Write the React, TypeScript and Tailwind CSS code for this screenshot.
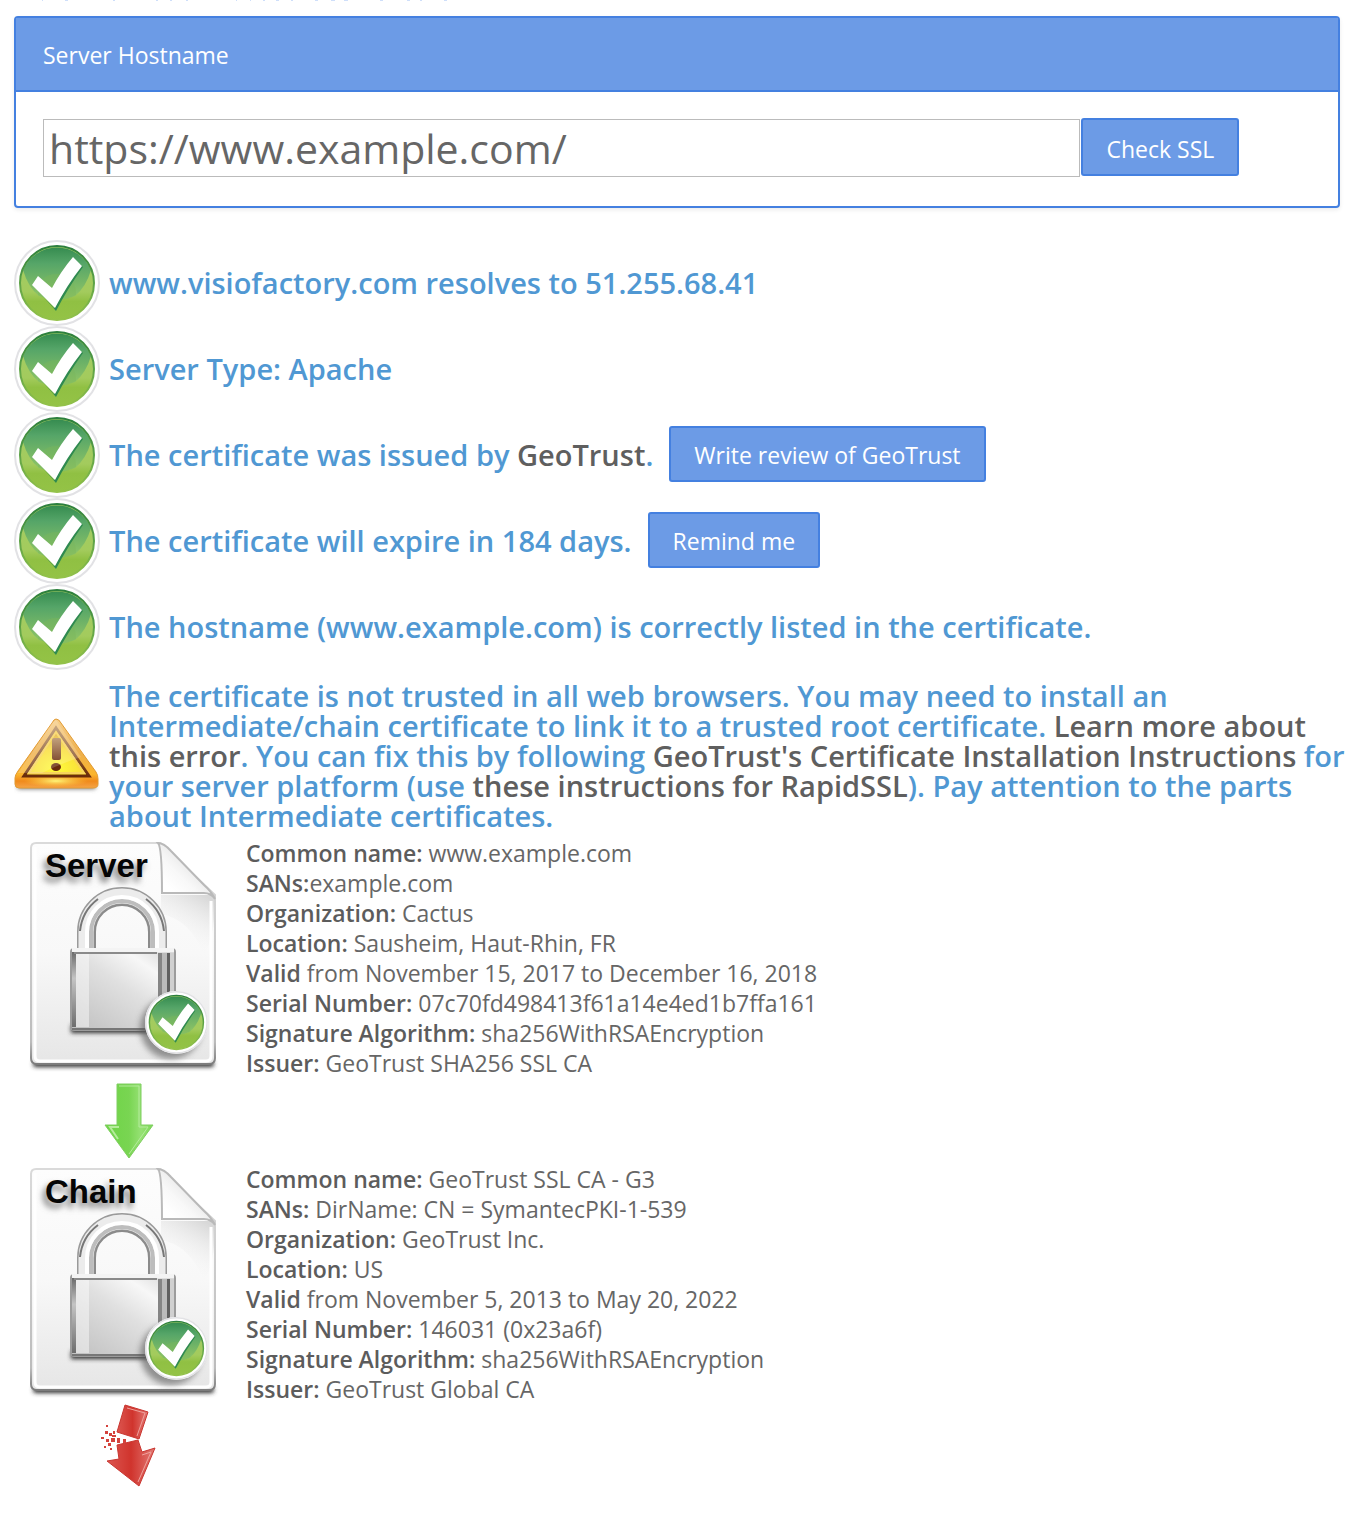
import type { ReactNode } from "react";

function Defs() {
  return (
    <svg width="0" height="0" className="absolute" aria-hidden="true">
      <defs>
        <linearGradient id="tickTop" x1="0" y1="0" x2="0" y2="1">
          <stop offset="0" stopColor="#368c50" />
          <stop offset="0.3" stopColor="#55a568" />
          <stop offset="1" stopColor="#93c765" />
        </linearGradient>
        <linearGradient id="tickBase" x1="0" y1="0" x2="0" y2="1">
          <stop offset="0.3" stopColor="#a3cc62" />
          <stop offset="0.62" stopColor="#a3cb5d" />
          <stop offset="0.75" stopColor="#90c043" />
          <stop offset="1" stopColor="#94c346" />
        </linearGradient>
        <linearGradient id="tickRim" x1="0" y1="0" x2="0" y2="1">
          <stop offset="0" stopColor="#2c7f3d" />
          <stop offset="0.5" stopColor="#5ca247" />
          <stop offset="1" stopColor="#94c24a" />
        </linearGradient>
        <linearGradient id="warnEdge" x1="0" y1="0" x2="0" y2="1">
          <stop offset="0" stopColor="#f6cf8c" />
          <stop offset="0.5" stopColor="#eeb04c" />
          <stop offset="0.8" stopColor="#fbb52c" />
          <stop offset="0.9" stopColor="#f08a1c" />
          <stop offset="1" stopColor="#f5a447" />
        </linearGradient>
        <radialGradient id="warnFace" cx="0.5" cy="0.85" r="0.85">
          <stop offset="0" stopColor="#fffb3c" />
          <stop offset="0.5" stopColor="#f8dc38" />
          <stop offset="1" stopColor="#dda33c" />
        </radialGradient>
        <radialGradient id="warnGlow" cx="0.5" cy="0.5" r="0.5">
          <stop offset="0" stopColor="#fff67a" />
          <stop offset="1" stopColor="#ffd040" stopOpacity="0" />
        </radialGradient>
        <linearGradient id="warnInk" x1="0" y1="0" x2="0" y2="1">
          <stop offset="0" stopColor="#b58d60" />
          <stop offset="1" stopColor="#6a2c0a" />
        </linearGradient>
        <linearGradient id="paper" x1="0" y1="0" x2="0" y2="1">
          <stop offset="0" stopColor="#fdfdfd" />
          <stop offset="0.5" stopColor="#f8f8f8" />
          <stop offset="1" stopColor="#e6e6e6" />
        </linearGradient>
        <linearGradient id="paperEdge" x1="0" y1="0" x2="0" y2="1">
          <stop offset="0" stopColor="#dadada" />
          <stop offset="0.9" stopColor="#bcbcbc" />
          <stop offset="1" stopColor="#7c7c7c" />
        </linearGradient>
        <linearGradient id="paperShade" x1="0.3" y1="1" x2="0.8" y2="0">
          <stop offset="0.2" stopColor="#f6f6f6" stopOpacity="0" />
          <stop offset="1" stopColor="#d8d8d8" />
        </linearGradient>
        <linearGradient id="fold" x1="0.2" y1="0.8" x2="0.7" y2="0.3">
          <stop offset="0" stopColor="#ffffff" />
          <stop offset="0.4" stopColor="#f8f8f8" />
          <stop offset="1" stopColor="#e2e2e2" />
        </linearGradient>
        <linearGradient id="body" x1="0" y1="1" x2="0.9" y2="0">
          <stop offset="0" stopColor="#bfbfbf" />
          <stop offset="0.55" stopColor="#e0e0e0" />
          <stop offset="0.8" stopColor="#f7f7f7" />
          <stop offset="1" stopColor="#dadada" />
        </linearGradient>
        <linearGradient id="bodySide" x1="0" y1="0" x2="0" y2="1">
          <stop offset="0" stopColor="#6a6a6a" />
          <stop offset="0.35" stopColor="#c4c4c4" />
          <stop offset="1" stopColor="#6d6d6d" />
        </linearGradient>
        <linearGradient id="goArrow" x1="0" y1="0" x2="1" y2="0">
          <stop offset="0" stopColor="#6ed446" />
          <stop offset="0.5" stopColor="#79d552" />
          <stop offset="0.75" stopColor="#96e174" />
          <stop offset="1" stopColor="#7bd956" />
        </linearGradient>
        <linearGradient id="stopArrow" x1="0" y1="0" x2="1" y2="0">
          <stop offset="0" stopColor="#dc5650" />
          <stop offset="0.5" stopColor="#d0342d" />
          <stop offset="1" stopColor="#e37a75" />
        </linearGradient>
        <filter id="soft1" x="-20%" y="-100%" width="140%" height="300%">
          <feGaussianBlur stdDeviation="2" />
        </filter>
        <filter id="soft3" x="-30%" y="-30%" width="160%" height="160%">
          <feGaussianBlur stdDeviation="3" />
        </filter>
      </defs>
    </svg>
  );
}

function TickArt() {
  return (
    <>
      <circle cx="43" cy="43" r="42" fill="#fff" stroke="#e2e2e5" strokeWidth="2" />
      <circle cx="43" cy="43" r="37" fill="url(#tickBase)" />
      <path d="M9 30A37 37 0 0 1 77 30Q72 47 61 56Q43 63 25 56Q14 47 9 30Z" fill="url(#tickTop)" />
      <path d="M24 55Q24 34 43 34T62 55Q53 60 43 60T24 55Z" fill="#79b65c" opacity="0.45" />
      <circle cx="43" cy="43" r="37" fill="none" stroke="url(#tickRim)" strokeWidth="2" />
      <path d="M21 47L42 71Q54 48 69 27L66 24L40 68Z" fill="#2f8a50" />
      <path d="M18 45L24 36L38 48Q47 31 59 17L68 26Q53 45 41 68Z" fill="#fff" />
    </>
  );
}

function TickIcon() {
  return (
    <svg viewBox="0 0 86 86" className="block size-[86px]" role="img" aria-label="Passed">
      <TickArt />
    </svg>
  );
}

function WarningIcon() {
  return (
    <svg viewBox="0 0 86 86" className="block size-[86px]" role="img" aria-label="Warning">
      <rect x="3" y="72" width="79" height="6" rx="3" fill="#777" filter="url(#soft1)" />
      <path d="M42 8Q45 8 47 12L82 61Q84 64 84 68V73Q84 77 79 77H5Q1 77 1 73V67Q1 64 4 60L38 12Q40 8 42 8Z" fill="url(#warnEdge)" stroke="#e29a32" />
      <ellipse cx="42" cy="70" rx="32" ry="6" fill="url(#warnGlow)" />
      <path d="M42 17L75 65H10Z" fill="url(#warnFace)" stroke="url(#warnInk)" strokeWidth="3" />
      <path d="M42 21L70 62H15Z" fill="none" stroke="#f8d45c" strokeWidth="2" />
      <rect x="38" y="27" width="9" height="22" rx="2" fill="url(#warnInk)" />
      <ellipse cx="42" cy="56" rx="5" ry="4" fill="#6a2c0c" />
      <path d="M42 9L67 46Q48 52 28 62H4L38 12Z" fill="#fff" opacity="0.18" />
    </svg>
  );
}

function CertificateIcon({ label }: { label: string }) {
  return (
    <svg viewBox="0 -1 228 240" className="block h-[240px] w-[228px]" role="img" aria-label={label + " certificate, valid"}>
      <rect x="19" y="222" width="181" height="6" rx="3" fill="#333" filter="url(#soft1)" />
      <path d="M22 4H146L201 56V219Q201 225 195 225H23Q17 225 17 219V9Q17 4 22 4Z" fill="url(#paper)" stroke="url(#paperEdge)" strokeWidth="2" />
      <path d="M147 56H200V80Q199 100 190 116Q176 80 147 75Z" fill="url(#paperShade)" />
      <path d="M21 8V217Q21 222 26 222H192Q197 222 197 217V62" fill="none" stroke="#fff" strokeWidth="3" />
      <path d="M144 4Q148 8 148 54H190Q197 54 201 60Q197 52 190 46L157 12Q150 4 144 4Z" fill="url(#fold)" stroke="#b9b9b9" strokeWidth="2" />
      <text x="28" y="43" fontSize="33" fontWeight="700" fontFamily="Liberation Sans, sans-serif" fill="#777" filter="url(#soft3)">{label}</text>
      <text x="31" y="38" fontSize="33" fontWeight="700" fontFamily="Liberation Sans, sans-serif" fill="#050505">{label}</text>
      <rect x="57" y="186" width="100" height="8" fill="#333" filter="url(#soft1)" />
      <path d="M72 112V93A36 36 0 0 1 144 93V112" fill="none" stroke="#9a9a9a" strokeWidth="18" />
      <path d="M72 112V93A36 36 0 0 1 144 93V112" fill="none" stroke="#ececec" strokeWidth="15" />
      <path d="M77 112V93A31 31 0 0 1 139 93V112" fill="none" stroke="#bdbdbd" strokeWidth="4" />
      <path d="M73 112V93A35 35 0 0 1 143 93V112" fill="none" stroke="#fff" strokeWidth="4" />
      <path d="M66 92Q68 72 84 60M150 92Q148 72 132 60" fill="none" stroke="#777" strokeWidth="2" />
      <path d="M81 112V93A27 27 0 0 1 135 93V112" fill="none" stroke="#8b8b8b" strokeWidth="2" />
      <rect x="57" y="110" width="104" height="81" rx="3" fill="url(#body)" stroke="#9c9c9c" strokeWidth="2" />
      <rect x="58" y="113" width="4" height="75" fill="url(#bodySide)" />
      <rect x="62" y="115" width="13" height="73" fill="#fff" opacity="0.45" />
      <rect x="144" y="114" width="4" height="75" fill="#858585" />
      <rect x="148" y="114" width="5" height="75" fill="#bbb" />
      <rect x="153" y="114" width="3" height="75" fill="#606060" />
      <rect x="156" y="114" width="4" height="75" fill="#d0d0d0" />
      <path d="M58 111H160" stroke="#f4f4f4" strokeWidth="4" />
      <path d="M60 114H143" stroke="#8a8a8a" strokeWidth="2" />
      <path d="M58 190H150" stroke="#777" strokeWidth="2" />
      <circle cx="157" cy="189" r="31" fill="#555" opacity="0.6" filter="url(#soft3)" />
      <g transform="translate(131 152) scale(0.73)">
        <circle cx="43" cy="43" r="43" fill="#fff" />
        <TickArt />
      </g>
    </svg>
  );
}

function ChainOkArrow() {
  return (
    <svg viewBox="0 -1 228 86" className="block h-[86px] w-[228px]" role="img" aria-label="Chain continues">
      <path d="M103 5H127V46H139L115 79L91 46H103Z" fill="url(#goArrow)" stroke="#7fce60" strokeWidth="1" />
      <path d="M105 7H125V48H134L115 75" fill="none" stroke="#b4eb9c" strokeWidth="1" />
      <path d="M105 48H96L104 60" fill="none" stroke="#b5eb9c" strokeWidth="2" />
    </svg>
  );
}

function ChainBrokenArrow() {
  return (
    <svg viewBox="0 -1 228 86" className="block h-[86px] w-[228px]" role="img" aria-label="Chain broken">
      <g stroke="#c93630" strokeWidth="1">
        <path d="M111 0L134 7L125 34L103 27Z" fill="url(#stopArrow)" />
        <path d="M103 40L124 35L128 47L141 43L125 81L93 56L105 54Z" fill="url(#stopArrow)" />
      </g>
      <path d="M113 3L131 8L123 31M128 50L137 47L124 77" fill="none" stroke="#efa19c" strokeWidth="1" />
      <path d="M97 33h4v4h-4zM103 33h3v5h-3zM109 34h3v4h-3zM91 26h3v3h-3zM95 28h3v3h-3zM87 32h3v2h-3zM92 34h3v3h-3zM94 38h3v3h-3zM90 41h2v2h-2zM96 43h2v2h-2zM92 20h2v2h-2zM99 26h2v3h-2zM98 30h4v2h-4z" fill="#d4423c" />
    </svg>
  );
}

const buttonLook =
  "shrink-0 cursor-pointer rounded-[3px] border-2 border-[#4480e0] bg-[#6c9be6] px-[23px] text-[23px] leading-[30px] font-normal text-white";

function Check({ icon, children }: { icon: ReactNode; children: ReactNode }) {
  return (
    <tr>
      <td className="w-[95px] p-0 align-middle">{icon}</td>
      <td className="p-0 align-middle text-[29px] leading-[30px] font-semibold text-[#5098d3]">{children}</td>
    </tr>
  );
}

function Ref({ children }: { children: ReactNode }) {
  return <a href="#" className="text-[#5f5f5f]">{children}</a>;
}

type Field = [string, string];

function Certificate({ label, fields }: { label: string; fields: Field[] }) {
  return (
    <tr>
      <td className="w-[232px] p-0 align-top"><CertificateIcon label={label} /></td>
      <td className="p-0 align-top text-[23px] leading-[30px] text-[#666]">
        {fields.map(([name, value]) => (
          <div key={name}><b className="font-semibold text-[#5c5c5c]">{name}</b>{value}</div>
        ))}
      </td>
    </tr>
  );
}

const serverFields: Field[] = [
  ["Common name:", " www.example.com"],
  ["SANs:", "example.com"],
  ["Organization:", " Cactus"],
  ["Location:", " Sausheim, Haut-Rhin, FR"],
  ["Valid", " from November 15, 2017 to December 16, 2018"],
  ["Serial Number:", " 07c70fd498413f61a14e4ed1b7ffa161"],
  ["Signature Algorithm:", " sha256WithRSAEncryption"],
  ["Issuer:", " GeoTrust SHA256 SSL CA"],
];

const chainFields: Field[] = [
  ["Common name:", " GeoTrust SSL CA - G3"],
  ["SANs:", " DirName: CN = SymantecPKI-1-539"],
  ["Organization:", " GeoTrust Inc."],
  ["Location:", " US"],
  ["Valid", " from November 5, 2013 to May 20, 2022"],
  ["Serial Number:", " 146031 (0x23a6f)"],
  ["Signature Algorithm:", " sha256WithRSAEncryption"],
  ["Issuer:", " GeoTrust Global CA"],
];

export default function App() {
  return (
    <main className="relative bg-white pt-4 pr-3 pb-8 pl-3.5 font-['Open_Sans',sans-serif]">
      <Defs />
      <svg width="460" height="1" className="absolute top-0 left-0" aria-hidden="true">
        <path
          d="M42 0h1M65 0h3M113 0h2M156 0h2M170 0h2M186 0h2M236 0h1M250 0h1M263 0h2M276 0h3M291 0h2M315 0h3M331 0h4M344 0h4M380 0h3M407 0h3M420 0h2M444 0h3"
          stroke="#cfdffa"
          strokeWidth="2"
        />
      </svg>
      <form
        className="mr-3 rounded-[4px] border-2 border-[#4480e0] shadow-[0_2px_4px_rgba(0,0,0,0.08)]"
        onSubmit={(e) => e.preventDefault()}
      >
        <div className="border-b-2 border-[#4480e0] bg-[#6c9be6] px-[27px] pt-[22px] pb-5">
          <label htmlFor="hostname" className="block text-[23px] leading-[30px] text-white">Server Hostname</label>
        </div>
        <div className="flex items-start px-[27px] pt-[26px] pb-[29px]">
          <input
            id="hostname"
            type="text"
            defaultValue="https://www.example.com/"
            className="mt-px mr-px h-[58px] w-9/11 border border-[#bbb] px-[5px] text-[41px] leading-[56px] text-[#666] outline-none"
          />
          <button type="submit" className={buttonLook + " h-[58px] pt-1"}>Check SSL</button>
        </div>
      </form>

      <table className="mt-8 w-full border-collapse">
        <tbody>
          <Check icon={<TickIcon />}>www.visiofactory.com resolves to 51.255.68.41</Check>
          <Check icon={<TickIcon />}>Server Type: Apache</Check>
          <Check icon={<TickIcon />}>
            <div className="flex items-center gap-4">
              <span>The certificate was issued by <Ref>GeoTrust</Ref>.</span>
              <button type="button" className={buttonLook + " mb-0.5 h-14 pt-0.5"}>Write review of GeoTrust</button>
            </div>
          </Check>
          <Check icon={<TickIcon />}>
            <div className="flex items-center gap-4">
              <span>The certificate will expire in 184 days.</span>
              <button type="button" className={buttonLook + " mb-0.5 h-14 pt-0.5"}>Remind me</button>
            </div>
          </Check>
          <Check icon={<TickIcon />}>The hostname (www.example.com) is correctly listed in the certificate.</Check>
          <Check icon={<WarningIcon />}>
            <p className="pt-[11px] pb-[7px]">
              The certificate is not trusted in all web browsers. You may need to install an Intermediate/chain
              certificate to link it to a trusted root certificate. <Ref>Learn more about this error</Ref>. You can fix
              this by following <Ref>GeoTrust's Certificate Installation Instructions</Ref> for your server platform
              (use <Ref>these instructions for RapidSSL</Ref>). Pay attention to the parts about Intermediate
              certificates.
            </p>
          </Check>
        </tbody>
      </table>

      <table className="w-full border-collapse">
        <tbody>
          <Certificate label="Server" fields={serverFields} />
          <tr><td colSpan={2} className="p-0"><ChainOkArrow /></td></tr>
          <Certificate label="Chain" fields={chainFields} />
          <tr><td colSpan={2} className="p-0"><ChainBrokenArrow /></td></tr>
        </tbody>
      </table>
    </main>
  );
}
